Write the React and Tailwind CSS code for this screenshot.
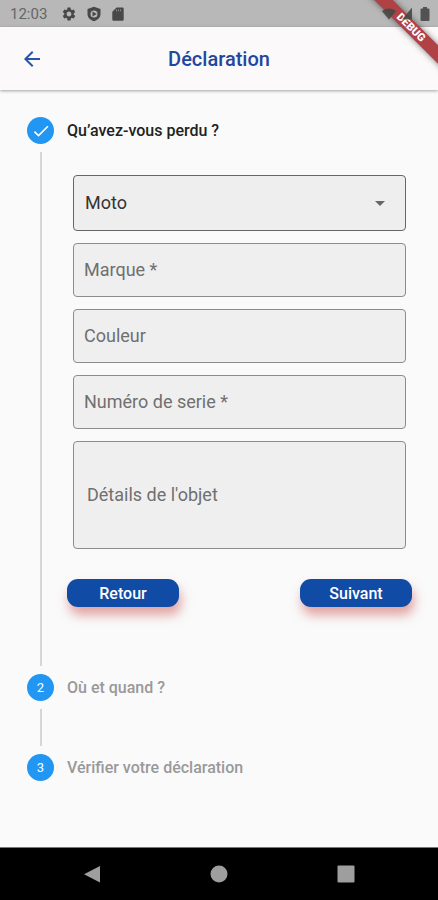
import React from "react";
import { MdSettings, MdArrowBack, MdCheck, MdArrowDropDown } from "react-icons/md";

function StatusBar() {
  return (
    <div className="flex h-[27px] items-center bg-[#b8b8b8] pr-2 pl-2.5 text-[#484848]">
      <span className="text-[15px] leading-6 text-[#666]">12:03</span>
      <MdSettings className="ml-3.5 size-4" />
      <svg viewBox="0 0 14 16" className="ml-2.5 h-4 w-3.5" fill="currentColor">
        <path
          fillRule="evenodd"
          d="M7 .8 13.500 3V8c0 3.500-2.600 6-6.500 7.200C3.100 14 .5 11.500.5 8V3ZM7 4.500A3.500 3.500 0 1 0 7 11.500A3.500 3.500 0 1 0 7 4.500Z"
        />
        <path d="M5.500 5.500 9.800 8 5.500 10.500Z" />
      </svg>
      <svg viewBox="0 0 12 14" className="ml-[11px] h-3.5 w-3" fill="currentColor">
        <path
          fillRule="evenodd"
          d="M4.500.5H10.500A1.200 1.200 0 0 1 11.700 1.700V12.500a1.200 1.200 0 0 1-1.200 1.200H1.500A1.200 1.200 0 0 1 .3 12.500V4.700ZM4.200 2.500V4.200H4.800V2.500ZM6.200 2.500V4.200H6.800V2.500ZM8.200 2.500V4.200H8.800V2.500Z"
        />
      </svg>
      <div className="relative z-30 ml-auto flex items-center opacity-90">
        <svg viewBox="0 0 14 13" className="h-[13px] w-3.5" fill="currentColor">
          <path d="M7 12.500 0 4.200C3.500.5 10.500.5 14 4.200Z" />
        </svg>
        <svg viewBox="0 0 10 13" className="ml-1.5 h-[13px] w-2.5" fill="currentColor">
          <path d="M10 .5V12.500H0Z" />
        </svg>
        <svg viewBox="0 0 10 14" className="ml-2 h-3.5 w-2.5" fill="currentColor">
          <path d="M3 0H7V1.500H8.500Q9.500 1.500 9.500 2.500V13Q9.500 14 8.500 14H1.500Q.5 14 .5 13V2.500Q.5 1.500 1.500 1.500H3Z" />
        </svg>
      </div>
    </div>
  );
}

function DebugBanner() {
  return (
    <div className="pointer-events-none absolute top-0 right-0 z-20 size-20 overflow-hidden">
      <div className="absolute top-[21px] -right-[33px] flex h-[13px] w-[120px] rotate-45 items-center justify-center bg-[#b04145] text-[11px] leading-3 font-black text-white shadow-[0_0_6px_rgba(0,0,0,0.5)]">
        DEBUG
      </div>
    </div>
  );
}

function Field({ id, label }) {
  return (
    <div className="relative">
      <input
        id={id}
        placeholder=" "
        className="peer block h-[54px] w-full rounded border border-[#8c8c8c] bg-[#efefef] px-[11px] text-lg text-[#333]"
      />
      <label
        htmlFor={id}
        className="pointer-events-none invisible absolute inset-y-0 left-[11px] flex items-center text-lg text-[#707070] peer-placeholder-shown:visible"
      >
        {label}
      </label>
    </div>
  );
}

function PillButton({ children }) {
  return (
    <button
      type="button"
      className="h-7 w-28 rounded-[11px] bg-[#104ba5] pt-0.5 text-base leading-none font-medium text-white shadow-[2px_8px_11px_rgba(200,80,75,0.5)]"
    >
      {children}
    </button>
  );
}

function Step({ marker, title, titleId, active, last, children }) {
  return (
    <li className="flex gap-[13px]">
      <div className="flex w-[27px] shrink-0 flex-col items-center">
        <span className="flex size-[27px] items-center justify-center rounded-full bg-[#2196f3] text-[13px] text-white">
          {marker}
        </span>
        {!last && <span className="my-2 w-0.5 flex-1 bg-[#d6d6d6]" />}
      </div>
      <div className="min-w-0 flex-1">
        <h2
          id={titleId}
          className={
            active
              ? "text-base leading-[27px] font-medium text-[#222]"
              : "text-base leading-[27px] font-medium text-[#999]"
          }
        >
          {title}
        </h2>
        {children}
      </div>
    </li>
  );
}

export default function App() {
  return (
    <div className="relative flex min-h-screen flex-col overflow-hidden bg-[#fafafa] font-['Roboto',sans-serif]">
      <StatusBar />
      <DebugBanner />
      <header className="z-10 grid h-[63px] grid-cols-[1fr_auto_1fr] items-center bg-[#fbf9fa] px-5 shadow-[0_1px_3px_rgba(0,0,0,0.35)]">
        <button type="button" aria-label="Retour" className="w-6 text-[#2853a8]">
          <MdArrowBack className="size-6" />
        </button>
        <h1 className="text-xl font-medium text-[#1f479f]">Déclaration</h1>
      </header>

      <main className="flex-1 px-[26px] pt-[27px]">
        <ol className="pl-px">
          <Step marker={<MdCheck className="size-5" />} title="Qu’avez-vous perdu ?" titleId="step-lost" active>
            <form className="pt-[31px] pb-[67px]">
              <div className="flex flex-col gap-3 px-1.5">
                <div className="relative">
                  <select
                    aria-labelledby="step-lost"
                    className="block h-14 w-full appearance-none rounded border border-[#666] bg-[#eee] px-[11px] text-lg text-[#333]"
                  >
                    <option>Moto</option>
                  </select>
                  <MdArrowDropDown className="pointer-events-none absolute top-4 right-3.5 size-6 text-[#666]" />
                </div>
                <Field id="brand" label="Marque *" />
                <Field id="colour" label="Couleur" />
                <Field id="serial" label="Numéro de serie *" />
                <div className="relative">
                  <textarea
                    id="details"
                    placeholder=" "
                    className="peer block h-[108px] w-full resize-none rounded border border-[#8c8c8c] bg-[#efefef] px-3 py-3 text-lg text-[#333]"
                  />
                  <label
                    htmlFor="details"
                    className="pointer-events-none invisible absolute inset-y-0 left-3.5 flex items-center text-lg text-[#707070] peer-placeholder-shown:visible"
                  >
                    Détails de l'objet
                  </label>
                </div>
              </div>
              <div className="flex justify-between pt-[30px]">
                <PillButton>Retour</PillButton>
                <PillButton>Suivant</PillButton>
              </div>
            </form>
          </Step>
          <Step marker="2" title="Où et quand ?">
            <div className="h-[53px]" />
          </Step>
          <Step marker="3" title="Vérifier votre déclaration" last />
        </ol>
      </main>

      <nav className="flex h-[53px] items-center justify-between border-t border-[#777] bg-black px-[82px] text-[#9e9e9e]">
        <button type="button" aria-label="Précédent">
          <svg viewBox="0 0 20 20" className="size-5" fill="currentColor">
            <path d="M18 2V18.500L2 10.200Z" />
          </svg>
        </button>
        <button type="button" aria-label="Accueil">
          <svg viewBox="0 0 20 20" className="size-5" fill="currentColor">
            <circle cx="10" cy="10" r="8.500" />
          </svg>
        </button>
        <button type="button" aria-label="Applications récentes">
          <svg viewBox="0 0 20 20" className="size-5" fill="currentColor">
            <rect x="1.500" y="1.500" width="17" height="17" rx="1" />
          </svg>
        </button>
      </nav>
    </div>
  );
}
